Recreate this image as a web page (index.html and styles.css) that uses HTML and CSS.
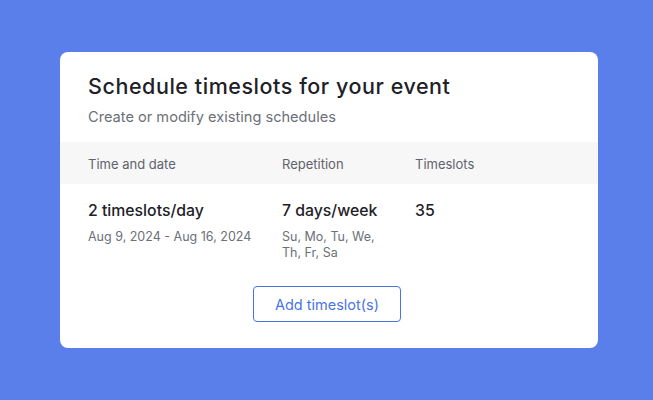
FILE: index.html
```html
<!DOCTYPE html>
<html>
<head>
<meta charset="utf-8">
<link rel="stylesheet" href="styles.css">
</head>
<body>
<div class="card">
  <div class="head">
    <h1 class="title">Schedule timeslots for your event</h1>
    <p class="sub">Create or modify existing schedules</p>
  </div>
  <div class="row thead">
    <div class="c1">Time and date</div>
    <div class="c2">Repetition</div>
    <div class="c3">Timeslots</div>
  </div>
  <div class="row tbody">
    <div class="c1">
      <div class="main">2 timeslots/day</div>
      <div class="minor">Aug 9, 2024 - Aug 16, 2024</div>
    </div>
    <div class="c2">
      <div class="main">7 days/week</div>
      <div class="minor">Su, Mo, Tu, We,<br>Th, Fr, Sa</div>
    </div>
    <div class="c3">
      <div class="main">35</div>
    </div>
  </div>
  <div class="actions">
    <button class="btn">Add timeslot(s)</button>
  </div>
</div>
</body>
</html>
```
FILE: styles.css
```css
html, body { margin: 0; padding: 0; }
body {
  width: 653px;
  height: 400px;
  background: #5a7fea;
  font-family: Inter, "Noto Sans", sans-serif;
  padding-top: 52px;
  box-sizing: border-box;
  overflow: hidden;
}
.card {
  width: 538px;
  height: 296px;
  margin-left: 60px;
  background: #fff;
  border-radius: 8px;
  overflow: hidden;
  box-sizing: border-box;
}
.head { padding: 20px 28px 0; height: 90px; box-sizing: border-box; }
.title {
  margin: 0;
  font-size: 21.5px;
  font-weight: 500;
  color: #1e2128;
  line-height: 28px;
  letter-spacing: 0.55px;
}
.sub {
  margin: 7px 0 0;
  font-size: 14.6px;
  color: #6b7079;
  line-height: 20px;
}
.row { display: flex; padding: 0 28px; }
.thead {
  background: #f7f7f8;
  height: 42px;
  align-items: center;
  font-size: 13px;
  color: #5f636b;
  padding-top: 1px;
  box-sizing: border-box;
}
.c1 { width: 194px; }
.c2 { width: 133px; }
.c3 { flex: 1; }
.tbody { padding-top: 17px; }
.main { font-size: 15.8px; font-weight: 500; color: #1e2128; line-height: 20px; }
.minor { font-size: 12.5px; color: #6b7079; line-height: 16px; margin-top: 8px; }
.actions { display: flex; justify-content: flex-start; padding-top: 25px; padding-left: 193px; }
.btn {
  width: 148px;
  height: 36px;
  border: 1px solid #4a74e6;
  border-radius: 4px;
  background: #fff;
  color: #4a74e6;
  font-family: Inter, "Noto Sans", sans-serif;
  font-size: 14.5px;
  padding: 0;
}
```
